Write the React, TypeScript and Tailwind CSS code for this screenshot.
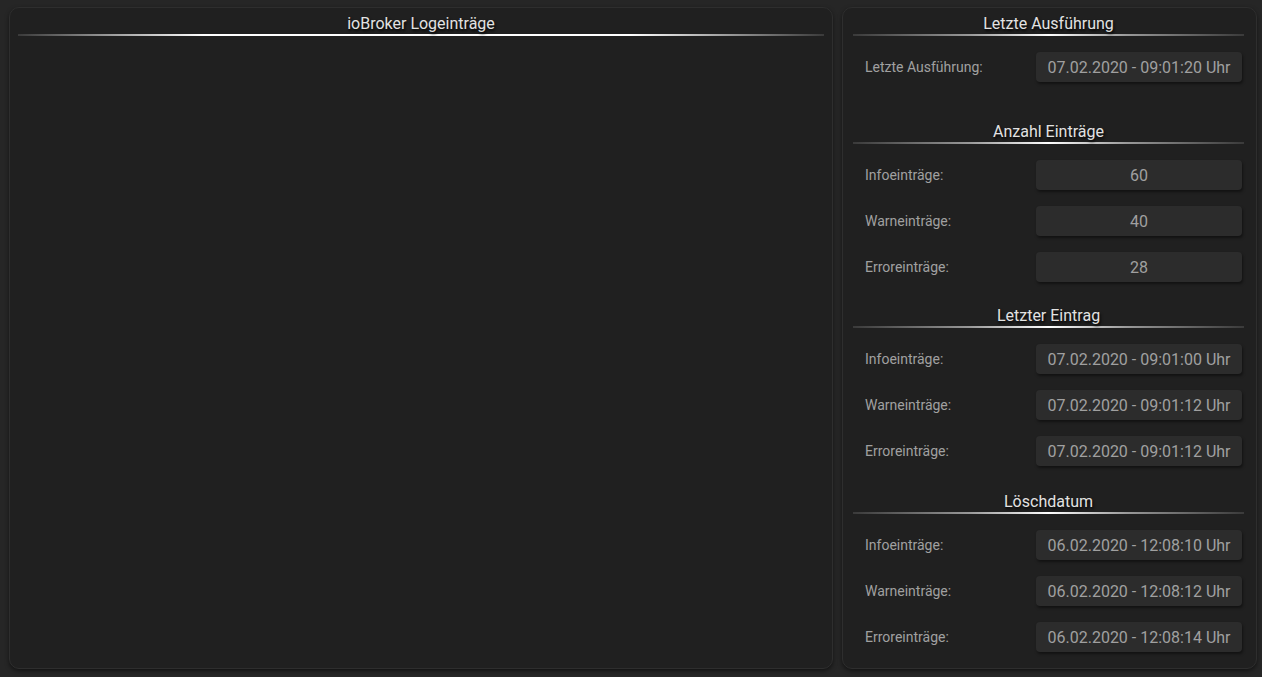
import React from 'react';

const font = { fontFamily: 'Roboto, "Liberation Sans", sans-serif' };

interface Row {
  label: string;
  value: string;
}

const SECTIONS: { title: string; mt: string; rows: Row[] }[] = [
  {
    title: 'Letzte Ausführung',
    mt: 'mt-[4px]',
    rows: [{ label: 'Letzte Ausführung:', value: '07.02.2020 - 09:01:20 Uhr' }],
  },
  {
    title: 'Anzahl Einträge',
    mt: 'mt-[38px]',
    rows: [
      { label: 'Infoeinträge:', value: '60' },
      { label: 'Warneinträge:', value: '40' },
      { label: 'Erroreinträge:', value: '28' },
    ],
  },
  {
    title: 'Letzter Eintrag',
    mt: 'mt-[22px]',
    rows: [
      { label: 'Infoeinträge:', value: '07.02.2020 - 09:01:00 Uhr' },
      { label: 'Warneinträge:', value: '07.02.2020 - 09:01:12 Uhr' },
      { label: 'Erroreinträge:', value: '07.02.2020 - 09:01:12 Uhr' },
    ],
  },
  {
    title: 'Löschdatum',
    mt: 'mt-[24px]',
    rows: [
      { label: 'Infoeinträge:', value: '06.02.2020 - 12:08:10 Uhr' },
      { label: 'Warneinträge:', value: '06.02.2020 - 12:08:12 Uhr' },
      { label: 'Erroreinträge:', value: '06.02.2020 - 12:08:14 Uhr' },
    ],
  },
];

const Header = ({ title, wide }: { title: string; wide?: boolean }) => (
  <div>
    <div className="h-[22px] pt-[2px] leading-[20px] text-center text-[16px] text-[#e2e2e2] [text-shadow:1px_2px_3px_#000]">
      {title}
    </div>
    <div
      className={
        wide
          ? 'h-[2px] bg-[linear-gradient(to_right,#3a3a3a,#ffffff_23%,#ffffff_76%,#3a3a3a)]'
          : 'h-[2px] bg-[linear-gradient(to_right,#3a3a3a,#9a9a9a_30%,#ffffff_50%,#9a9a9a_70%,#3a3a3a)]'
      }
    />
  </div>
);

const ValueRow = ({ label, value }: Row) => (
  <div className="flex items-center justify-between pl-[12px] pr-[2px] mt-[16px]">
    <span className="text-[14px] text-[#a0a0a0]">{label}</span>
    <div className="w-[206px] h-[30px] pt-[2px] rounded-[4px] bg-[#2c2c2c] shadow-[1px_2px_3px_rgba(0,0,0,0.45)] flex items-center justify-center text-[16px] text-[#a0a0a0]">
      {value}
    </div>
  </div>
);

export default function App() {
  return (
    <div style={font} className="w-[1262px] h-[677px] bg-[#262626] flex gap-[9px] pl-[9px] pr-[5px] pt-[7px] pb-[8px]">
      <div className="w-[824px] rounded-[10px] bg-[#202020] border border-[#2e2e2e] shadow-[0_2px_4px_rgba(0,0,0,0.5)] pt-[4px] px-[8px]">
        <Header title="ioBroker Logeinträge" wide />
      </div>
      <div className="flex-1 rounded-[10px] bg-[#202020] border border-[#2e2e2e] shadow-[0_2px_4px_rgba(0,0,0,0.5)] pl-[10px] pr-[12px]">
        {SECTIONS.map((s) => (
          <div key={s.title} className={s.mt}>
            <Header title={s.title} />
            {s.rows.map((r, i) => (
              <ValueRow key={i} label={r.label} value={r.value} />
            ))}
          </div>
        ))}
      </div>
    </div>
  );
}
